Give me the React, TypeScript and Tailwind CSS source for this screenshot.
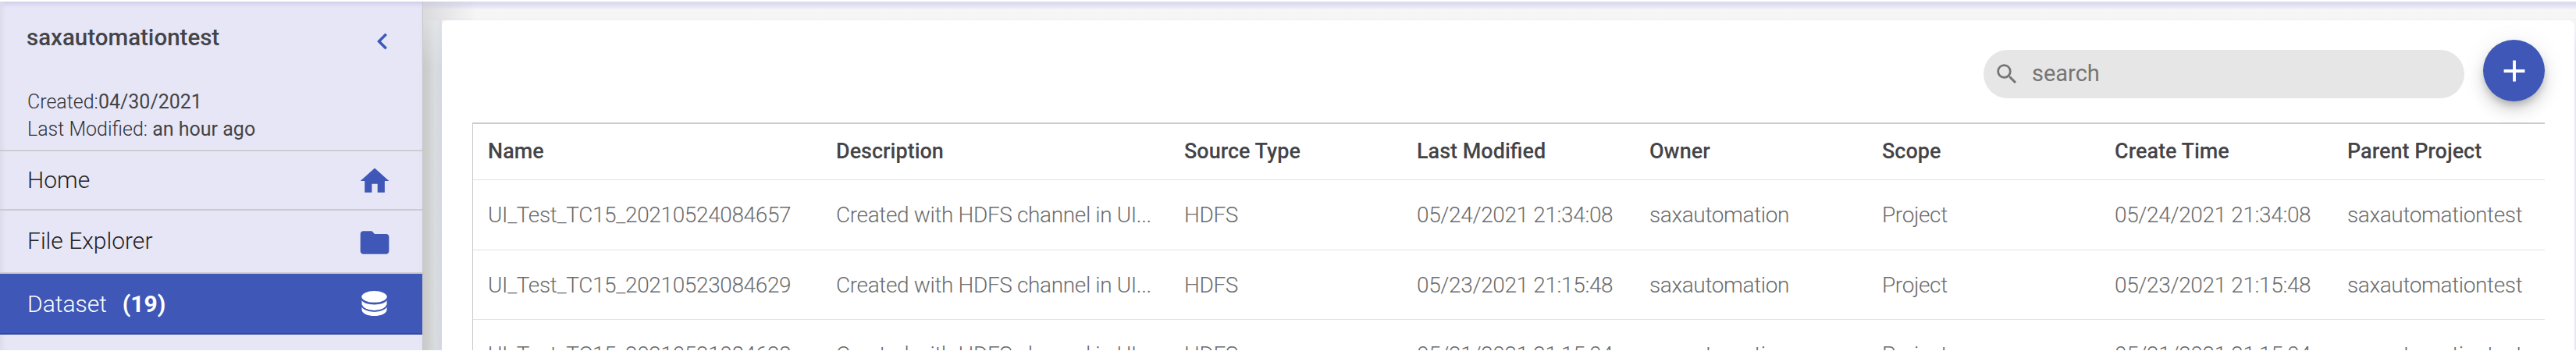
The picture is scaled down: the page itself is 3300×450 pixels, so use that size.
import { MdChevronLeft, MdHome, MdFolder, MdSearch, MdAdd } from "react-icons/md";

const COLUMNS = [
  "Name",
  "Description",
  "Source Type",
  "Last Modified",
  "Owner",
  "Scope",
  "Create Time",
  "Parent Project",
];

const ROWS = [
  { name: "UI_Test_TC15_20210524084657", time: "05/24/2021 21:34:08" },
  { name: "UI_Test_TC15_20210523084629", time: "05/23/2021 21:15:48" },
  { name: "UI_Test_TC15_20210521084628", time: "05/21/2021 21:15:04" },
];

const GRID =
  "grid grid-cols-[446px_446px_298px_298px_298px_298px_298px_1fr] items-center pl-[19px]";

function DatabaseIcon({ className }: { className?: string }) {
  return (
    <svg className={className} viewBox="0 0 33 32" fill="currentColor">
      <ellipse cx="16.5" cy="7.4" rx="16.2" ry="7.4" />
      <path d="M0.5 11.5C5 18 28 18 32.5 11.5V17C31 27.5 2 27.5 0.5 17Z" />
      <path d="M0.5 20C5 28.5 28 28.5 32.5 20V24.5C31 34.5 2 34.5 0.5 24.5Z" />
      <path
        d="M0.3 10.5C4 18.5 29 18.5 32.7 10.5M0.3 18.5C4 28.3 29 28.3 32.7 18.5"
        fill="none"
        stroke="#3f57b7"
        strokeWidth="1.8"
      />
    </svg>
  );
}

function Sidebar() {
  return (
    <aside className="flex h-full w-[542px] shrink-0 flex-col border-r border-[#c8c8cc] bg-[#e7e6f7] shadow-[inset_8px_0_6px_-4px_#dddcec,inset_0_6px_6px_-3px_#c9cbe8]">
      <div className="flex h-[190px] flex-col pl-[35px]">
        <div className="-ml-px flex items-start justify-between pt-[25px] pr-[30px]">
          <span className="text-[29.5px] leading-[42px] font-medium text-[#444448]">
            saxautomationtest
          </span>
          <MdChevronLeft className="mt-[5px] size-[42px] text-[#3f57b7]" />
        </div>
        <div className="pt-[39px] text-[25px] leading-[35px] font-light text-[#333]">
          <p>
            Created:<span className="font-normal text-[#444]">04/30/2021</span>
          </p>
          <p>
            Last Modified: <span className="font-normal text-[#444]">an hour ago</span>
          </p>
        </div>
      </div>
      <div className="flex h-[76px] items-center justify-between border-t-2 border-[#cccccf] pr-[39px] pl-[35px]">
        <span className="-mt-0.5 text-[30px] font-light text-[#222]">Home</span>
        <MdHome className="mt-0.5 size-[44px] text-[#3f57b7]" />
      </div>
      <div className="flex h-[83px] items-center justify-between border-y-2 border-[#cccccf] pr-[39px] pl-[35px]">
        <span className="-mt-0.5 text-[30px] font-light text-[#222]">File Explorer</span>
        <MdFolder className="mt-0.5 size-[44px] text-[#3f57b7]" />
      </div>
      <div className="flex h-[78px] items-center justify-between border-b-2 border-[#3548a0] bg-[#3f57b7] pr-[45px] pl-[35px] text-white">
        <span className="text-[30px]">
          <span className="font-light">Dataset</span>
          <span className="ml-5 font-bold">(19)</span>
        </span>
        <DatabaseIcon className="h-[32px] w-[33px]" />
      </div>
    </aside>
  );
}

function DatasetTable() {
  return (
    <div className="ml-[39px] w-[2655px] border-t-2 border-l border-[#cccccc]">
      <div className={`${GRID} h-[72px] border-b border-[#e2e2e2] text-[27px] font-medium text-[#444448]`}>
        {COLUMNS.map((c) => (
          <span key={c}>{c}</span>
        ))}
      </div>
      {ROWS.map((r) => (
        <div
          key={r.name}
          className={`${GRID} h-[89.5px] border-b border-[#e2e2e2] pt-0.5 text-[28px] font-light tracking-[-0.37px] whitespace-nowrap text-[#6b6b6b]`}
        >
          <span>{r.name}</span>
          <span>Created with HDFS channel in UI...</span>
          <span>HDFS</span>
          <span>{r.time}</span>
          <span>saxautomation</span>
          <span>Project</span>
          <span>{r.time}</span>
          <span>saxautomationtest</span>
        </div>
      ))}
    </div>
  );
}

export default function App() {
  return (
    <div className="h-[450px] w-[3300px] overflow-hidden bg-white pt-0.5 pb-px font-['Roboto',sans-serif]">
      <div className="flex h-full overflow-hidden bg-[#e7e6f7]">
        <Sidebar />
        <div className="flex min-w-0 flex-1 flex-col bg-[linear-gradient(to_bottom,#f6f6f7_24px,#e7e6f7_60px)]">
          {/* strip under the toolbar shadow */}
          <div className="h-6 shrink-0 bg-[linear-gradient(to_bottom,#d6dcee_0,#dedff0_4px,#ecebf8_8px,#f6f6f7_10px,#f6f6f7_21px,#efeff8_24px)]">
            <div className="h-full w-[70px] bg-[linear-gradient(to_right,#c8c8cc,transparent)] opacity-60" />
          </div>
          <div className="flex min-h-0 flex-1">
            <div className="w-6 shrink-0 bg-[linear-gradient(to_bottom,#eaebee88,transparent_60px),linear-gradient(to_right,#c9c9c9,#cecece_25%,#d9dddf_65%,#d3d6e2)]" />
            <main className="w-[2732px] shrink-0 rounded-t-lg bg-white">
              <div className="flex h-[131px] pt-[25px] pl-[1975px]">
                <div className="mt-[13px] flex h-[62px] w-[616px] items-center rounded-[31px] bg-[#e6e6e6] text-[#757575]">
                  <MdSearch className="ml-[13px] size-[34px]" />
                  <span className="-mt-0.5 ml-[15px] text-[29px] leading-none">search</span>
                </div>
                <button
                  className="ml-6 flex size-[79px] items-center justify-center rounded-full bg-[#3f57b7] text-white shadow-[0_6px_10px_-2px_rgba(0,0,0,0.2),0_12px_20px_rgba(0,0,0,0.12),0_4px_32px_rgba(0,0,0,0.08)]"
                  aria-label="Add"
                >
                  <MdAdd className="size-[46px]" />
                </button>
              </div>
              <DatasetTable />
            </main>
          </div>
        </div>
      </div>
    </div>
  );
}
